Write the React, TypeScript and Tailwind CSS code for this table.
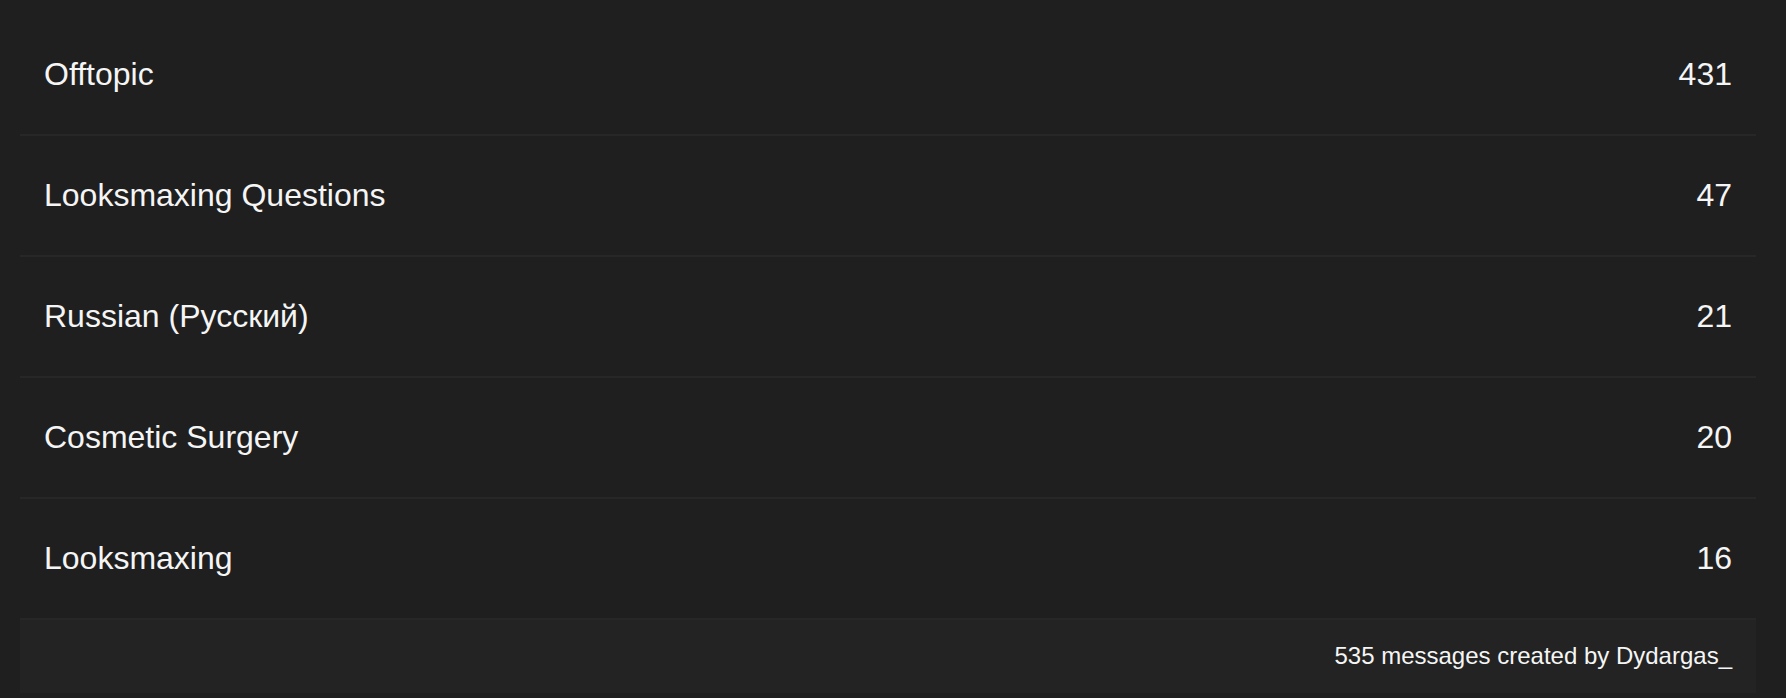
import React from "react";

const rows = [
  { name: "Offtopic", count: 431 },
  { name: "Looksmaxing Questions", count: 47 },
  { name: "Russian (Русский)", count: 21 },
  { name: "Cosmetic Surgery", count: 20 },
  { name: "Looksmaxing", count: 16 },
];

export default function App() {
  return (
    <div
      className="min-h-[698px] w-full bg-[#1f1f1f] pt-[15px] pb-[6px] pl-[20px] pr-[30px]"
      style={{ fontFamily: '"Liberation Sans", Arial, Helvetica, sans-serif' }}
    >
      <div className="flex flex-col">
        {rows.map((r) => (
          <div
            key={r.name}
            className="flex h-[121px] items-center justify-between border-b-2 border-[#272727] px-6 pb-[2px] text-[32px] leading-[36px] text-[#f5f5f5]"
          >
            <span>{r.name}</span>
            <span>{r.count}</span>
          </div>
        ))}
        <div className="flex h-[73px] items-center justify-end bg-[#232323] px-6 pb-[1px] text-[24px] leading-[28px] text-[#f5f5f5]">
          535 messages created by Dydargas_
        </div>
      </div>
    </div>
  );
}
